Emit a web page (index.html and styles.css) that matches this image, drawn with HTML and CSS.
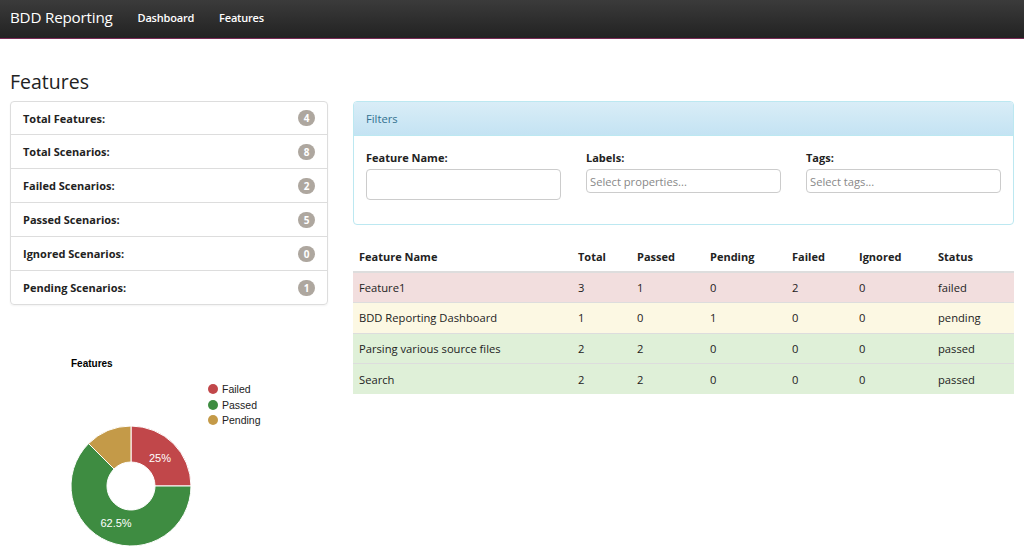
FILE: index.html
```html
<!DOCTYPE html>
<html>
<head>
<meta charset="utf-8">
<title>BDD Reporting</title>
<link rel="stylesheet" href="styles.css">
</head>
<body>
<nav class="navbar">
  <span class="brand">BDD Reporting</span>
  <a class="nav-link">Dashboard</a>
  <a class="nav-link">Features</a>
</nav>
<main class="page">
  <h1 class="title">Features</h1>
  <div class="layout">
    <div class="left">
      <ul class="stats">
        <li class="stat"><span>Total Features:</span><span class="badge">4</span></li>
        <li class="stat"><span>Total Scenarios:</span><span class="badge">8</span></li>
        <li class="stat"><span>Failed Scenarios:</span><span class="badge">2</span></li>
        <li class="stat"><span>Passed Scenarios:</span><span class="badge">5</span></li>
        <li class="stat"><span>Ignored Scenarios:</span><span class="badge">0</span></li>
        <li class="stat"><span>Pending Scenarios:</span><span class="badge">1</span></li>
      </ul>
      <svg class="chart" width="318" height="249" viewBox="0 0 318 249">
        <text x="61" y="62" class="chart-title">Features</text>
        <circle cx="203" cy="84" r="5" fill="#c1474a"/>
        <text x="212" y="88" class="legend">Failed</text>
        <circle cx="203" cy="100" r="5" fill="#3e8c41"/>
        <text x="212" y="104" class="legend">Passed</text>
        <circle cx="203" cy="115" r="5" fill="#c49a48"/>
        <text x="212" y="119" class="legend">Pending</text>
        <path d="M121 121 A60 60 0 0 1 181 181 L145 181 A24 24 0 0 0 121 157 Z" fill="#c1474a" stroke="#fff" stroke-width="1"/>
        <path d="M181 181 A60 60 0 1 1 78.57 138.57 L104.03 164.03 A24 24 0 1 0 145 181 Z" fill="#3e8c41" stroke="#fff" stroke-width="1"/>
        <path d="M78.57 138.57 A60 60 0 0 1 121 121 L121 157 A24 24 0 0 0 104.03 164.03 Z" fill="#c49a48" stroke="#fff" stroke-width="1"/>
        <text x="150" y="157" class="slice-label" text-anchor="middle">25%</text>
        <text x="106" y="222" class="slice-label" text-anchor="middle">62.5%</text>
      </svg>
    </div>
    <div class="right">
      <section class="filters">
        <div class="filters-head">Filters</div>
        <div class="filters-body">
          <div class="field">
            <label>Feature Name:</label>
            <div class="input input-tall"></div>
          </div>
          <div class="field">
            <label>Labels:</label>
            <div class="input"><span class="placeholder">Select properties...</span></div>
          </div>
          <div class="field">
            <label>Tags:</label>
            <div class="input"><span class="placeholder">Select tags...</span></div>
          </div>
        </div>
      </section>
      <table class="grid">
        <thead>
          <tr><th class="c-name">Feature Name</th><th class="c-total">Total</th><th class="c-passed">Passed</th><th class="c-pending">Pending</th><th class="c-failed">Failed</th><th class="c-ignored">Ignored</th><th>Status</th></tr>
        </thead>
        <tbody>
          <tr class="danger"><td>Feature1</td><td>3</td><td>1</td><td>0</td><td>2</td><td>0</td><td>failed</td></tr>
          <tr class="warning"><td>BDD Reporting Dashboard</td><td>1</td><td>0</td><td>1</td><td>0</td><td>0</td><td>pending</td></tr>
          <tr class="success"><td>Parsing various source files</td><td>2</td><td>2</td><td>0</td><td>0</td><td>0</td><td>passed</td></tr>
          <tr class="success"><td>Search</td><td>2</td><td>2</td><td>0</td><td>0</td><td>0</td><td>passed</td></tr>
        </tbody>
      </table>
    </div>
  </div>
</main>
</body>
</html>
```

FILE: styles.css
```css
* { box-sizing: border-box; }
body {
  margin: 0;
  font-family: "Open Sans", "Noto Sans", sans-serif;
  font-size: 11.2px;
  color: #333;
  background: #fff;
}
.navbar {
  height: 39px;
  display: flex;
  align-items: center;
  padding: 0 10px 4px;
  background: linear-gradient(#3b3b3b, #222);
  border-bottom: 1px solid #7b2a56;
}
.brand {
  color: #fff;
  font-size: 15.2px;
  margin-right: 25px;
  letter-spacing: -0.2px;
}
.nav-link {
  color: #fff;
  font-size: 11px;
  font-weight: 600;
  margin-right: 25px;
  letter-spacing: -0.2px;
}
.page {
  padding: 0 10px;
}
.title {
  margin: 31px 0 8px;
  font-size: 19.5px;
  font-weight: 400;
  line-height: 23px;
  color: #222;
}
.layout {
  display: grid;
  grid-template-columns: 318px 1fr;
  column-gap: 25px;
}
.stats {
  list-style: none;
  margin: 0;
  padding: 0;
  border: 1px solid #ddd;
  border-radius: 4px;
  box-shadow: 0 1px 2px rgba(0,0,0,0.05);
}
.stat {
  height: 34px;
  display: flex;
  align-items: center;
  justify-content: space-between;
  padding: 0 12px 0 12px;
  font-weight: 700;
  font-size: 11px;
  border-top: 1px solid #ddd;
  color: #222;
}
.stat:first-child { border-top: 0; height: 32px; }
.badge {
  width: 17px;
  height: 16px;
  border-radius: 8px;
  background: #aea79f;
  color: #fff;
  font-size: 10px;
  font-weight: 700;
  display: flex;
  align-items: center;
  justify-content: center;
}
.chart { display: block; }
.chart-title { font-family: "Liberation Sans", Arial, sans-serif; font-size: 10px; font-weight: 700; fill: #000; }
.legend { font-family: "Liberation Sans", Arial, sans-serif; font-size: 10.5px; fill: #222; }
.slice-label { font-family: "Liberation Sans", Arial, sans-serif; font-size: 11px; fill: #fff; }
.filters {
  border: 1px solid #bce8f1;
  border-radius: 4px;
  height: 124px;
}
.filters-head {
  height: 34px;
  display: flex;
  align-items: center;
  padding: 0 12px;
  color: #31708f;
  background: linear-gradient(#d9edf7, #c4e3f3);
  border-bottom: 1px solid #bce8f1;
  border-radius: 3px 3px 0 0;
}
.filters-body {
  display: grid;
  grid-template-columns: repeat(3, 195px);
  column-gap: 25px;
  padding: 14px 12px 0;
}
.field label {
  display: block;
  font-weight: 700;
  font-size: 11px;
  color: #222;
  margin-bottom: 3px;
  line-height: 16px;
}
.input {
  height: 24px;
  border: 1px solid #ccc;
  border-radius: 4px;
  display: flex;
  align-items: center;
  padding: 0 3px;
  background: #fff;
}
.input-tall { height: 31px; }
.placeholder { color: #888; }
.grid {
  width: 100%;
  margin-top: 16px;
  border-collapse: collapse;
}
.grid th {
  text-align: left;
  font-weight: 700;
  font-size: 11px;
  color: #222;
  height: 31px;
  padding: 0 6px;
  border-bottom: 2px solid #ddd;
}
.grid td {
  height: 30.5px;
  padding: 0 6px;
  border-top: 1px solid #ddd;
  color: #222;
}
.c-name { width: 219px; }
.c-total { width: 59px; }
.c-passed { width: 73px; }
.c-pending { width: 82px; }
.c-failed { width: 67px; }
.c-ignored { width: 79px; }
.danger td { background: #f2dede; }
.warning td { background: #fcf8e3; }
.success td { background: #dff0d8; }
```
